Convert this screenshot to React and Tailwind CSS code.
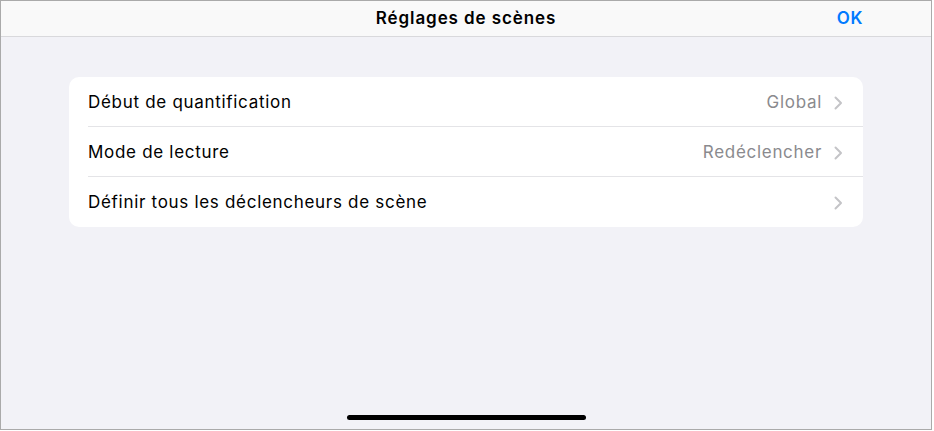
const ROWS = [
    { label: "Début de quantification", value: "Global" },
    { label: "Mode de lecture", value: "Redéclencher" },
    { label: "Définir tous les déclencheurs de scène", value: null },
];

function Chevron() {
    return (
        <svg width="9" height="14" viewBox="0 0 9 14" fill="none" className="shrink-0">
            <path d="M1.5 1.5L7 7l-5.5 5.5" stroke="#c4c4c7" strokeWidth="2" strokeLinecap="round" strokeLinejoin="round" />
        </svg>
    );
}

function SettingsRow({ label, value, last }) {
    return (
        <div className="h-[50px] pl-[19px] flex items-stretch">
            <div className={"flex-1 flex items-center pr-[20px] pt-[2px] " + (last ? "" : "border-b border-[#e4e4e7]")}>
                <span className="flex-1 text-[17px] tracking-[0.7px] text-black">{label}</span>
                {value && <span className="text-[17px] tracking-[0.7px] text-[#8a8a8e] mr-[12px]">{value}</span>}
                <Chevron />
            </div>
        </div>
    );
}

export default function App() {
    return (
        <div className="w-[934px] h-[431px] bg-white" style={{ fontFamily: "Inter, 'Noto Sans', sans-serif" }}>
            <div className="w-[932px] h-[430px] border border-[#aaaaaa] bg-[#f2f2f7] flex flex-col">
                <div className="h-[36px] shrink-0 bg-[#f9f9f9] border-b border-[#d9d9dc] relative flex items-center justify-center">
                    <span className="text-[17px] font-semibold text-black tracking-[0.9px]">Réglages de scènes</span>
                    <button className="absolute right-[68px] text-[17px] font-semibold tracking-[0.6px] text-[#007aff]">OK</button>
                </div>
                <div className="px-[68px] pt-[40px]">
                    <div className="bg-white rounded-[10px] overflow-hidden">
                        {ROWS.map((r, i) => (
                            <SettingsRow key={r.label} {...r} last={i === ROWS.length - 1} />
                        ))}
                    </div>
                </div>
                <div className="mt-auto mb-[9px] flex justify-center">
                    <div className="w-[239px] h-[5px] rounded-full bg-black" />
                </div>
            </div>
        </div>
    );
}
